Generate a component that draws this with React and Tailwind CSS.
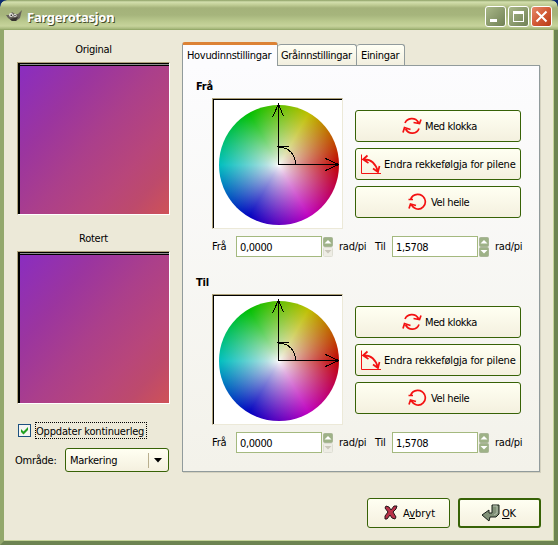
import React from "react";

const wheelBg =
  "bg-[radial-gradient(circle_closest-side,rgba(0,0,0,0)_0%,rgba(0,0,0,.056)_5%,rgba(0,0,0,.112)_20%,rgba(0,0,0,.158)_40%,rgba(0,0,0,.194)_60%,rgba(0,0,0,.224)_80%,rgba(0,0,0,.25)_100%),radial-gradient(circle_closest-side,rgba(255,255,255,1),rgba(255,255,255,0)),conic-gradient(from_90deg,#f00,#f0f,#00f,#0ff,#0f0,#ff0,#f00)]";

function Preview() {
  return (
    <div className="w-[153px] h-[153px] border border-t-[#aca078] border-l-[#aca078] border-b-white border-r-white">
      <div className="h-full w-full border-l-2 border-t border-black">
        <div className="h-full w-full border-t border-[#8f8f8f]">
          <div className="h-full w-full border-t border-black bg-[linear-gradient(130deg,#8a2dc0_0%,#9b359f_28%,#ab3f8b_50%,#b8467a_72%,#bd4a6c_85%,#cf5257_100%)]" />
        </div>
      </div>
    </div>
  );
}

function Wheel() {
  return (
    <div className="relative w-[131px] h-[131px] bg-white border border-t-[#aca078] border-l-[#aca078] border-b-[#ece9d8] border-r-[#ece9d8]">
      <div className="w-full h-full border-t border-l border-black pl-[5px] pt-[5px]">
        <div className={"w-[120px] h-[120px] rounded-full " + wheelBg} />
      </div>
      <svg className="absolute -left-px -top-px" width="131" height="131" fill="none" stroke="#000" shapeRendering="crispEdges">
        <path d="M66.5 5V66.5H127M66.5 6L60.5 19.500M66.5 6L71.500 18.500M126.500 66.5L113.500 60.500M126.500 66.5L113.500 72.500M65 48.500H77M67 49.500C77 49 83.500 57 83.500 66" />
      </svg>
    </div>
  );
}

function CycleIcon() {
  return (
    <svg width="20" height="18" viewBox="0 0 20 18" fill="none" stroke="#f31212" strokeWidth="1.700">
      <path d="M3 6C5 1 13 -.5 16.500 5.500M19 2.500L17.500 6.500L11.500 5.500M17 11.500C15 17 7 18 3.500 12M1 15.500L2.500 10.500L8.500 12.500" />
    </svg>
  );
}

function SwapIcon() {
  return (
    <svg width="20" height="21" viewBox="0 0 20 21" fill="none" stroke="#f31212">
      <path d="M.5 .5V19.500H20" />
      <path strokeWidth="1.700" d="M2 5.500C10 5 15 10 17 18M6.500 1.500L2 5.500L7.500 9M12 14.500L17 18L18.500 12" />
    </svg>
  );
}

function FullIcon() {
  return (
    <svg width="19" height="19" viewBox="0 0 19 19" fill="none" stroke="#f31212" strokeWidth="1.700">
      <path d="M.5 6.500H5M2.500 6.500C5 0 13.500 -.5 16.500 5.500C19.500 12 13 18 7.500 15.500C5 14.500 4 13 3 11.500M1 15.500L2.500 11L8 12.500" />
    </svg>
  );
}

function SideButton({ children, className = "" }) {
  return (
    <button className={"flex h-8 w-[166px] items-center rounded-[3px] border border-[#376206] bg-linear-to-b from-[#fffff2] to-[#f4f0df] whitespace-nowrap " + className}>
      {children}
    </button>
  );
}

function Spin({ value, off }) {
  return (
    <div className="flex items-center">
      <div className="h-[21px] w-[86px] border border-[#a4b97f] bg-white pl-[3px] leading-[21px] tracking-[-0.4px]">{value}</div>
      <svg className="ml-px" width="11" height="20">
        <rect x=".5" y=".5" width="9" height="9" rx="1" fill="#9eb287" stroke="#a9b697" />
        <path d="M1.500 6.500H8.500L5 3Z" fill="#fff" />
        <rect x=".5" y="10.500" width="9" height="9" rx="1" fill={off ? "#eeede5" : "#9eb287"} stroke={off ? "#deded4" : "#a9b697"} />
        <path d="M1.500 13H8.500L5 16.500Z" fill={off ? "#c9c7ba" : "#fff"} />
      </svg>
    </div>
  );
}

function Section({ title }) {
  return (
    <section className="h-[196px]">
      <h2 className="ml-[13px] h-[19px] font-bold leading-[16px]">{title}</h2>
      <div className="ml-[29px] flex h-[138px]">
        <Wheel />
        <div className="ml-3 mt-3 flex flex-col gap-1.5">
          <SideButton className="pl-[46px]">
            <CycleIcon />
            <span className="ml-[3px] pt-px tracking-[-0.4px]">Med klokka</span>
          </SideButton>
          <SideButton className="pl-[5px]">
            <SwapIcon />
            <span className="ml-[3px] pt-px tracking-[-0.18px]">Endra rekkefølgja for pilene</span>
          </SideButton>
          <SideButton className="pl-[52px]">
            <FullIcon />
            <span className="ml-[4px] pt-px tracking-[-0.4px]">Vel heile</span>
          </SideButton>
        </div>
      </div>
      <div className="ml-[29px] flex h-[21px] items-center">
        <span className="w-[24px] pt-px">Frå</span>
        <Spin value="0,0000" off />
        <span className="ml-[5px] w-[36px] pt-px">rad/pi</span>
        <span className="w-[17px] pt-px">Til</span>
        <Spin value="1,5708" />
        <span className="ml-[5px] pt-px">rad/pi</span>
      </div>
    </section>
  );
}

function TitleBar() {
  return (
    <header className="flex h-[30px] shrink-0 items-start rounded-t-[7px] border-b border-[#96aa6b] bg-[linear-gradient(#8c9f64_0px,#d3dfae_2px,#bfcc94_5px,#a4b27a_8px,#a6b57c_15px,#bccb90_22px,#c6d39b_26px,#98ac6e_30px)] pl-[6px] pr-[6px]">
      <svg className="mt-[9px]" width="17" height="14" viewBox="0 0 17 14">
        <path d="M0 6L4 6L6 3L9 5L12 5L16 1L14 9L10 12L6 12L2 9Z" fill="#67635b" />
        <path d="M4 10L12 8L10 12L6 12Z" fill="#35332f" />
        <circle cx="5" cy="6" r="2" fill="#e5e4de" />
        <circle cx="9" cy="6.500" r="1.700" fill="#d4d4ce" />
        <circle cx="5.300" cy="6.200" r=".8" fill="#111" />
        <circle cx="9" cy="6.600" r=".7" fill="#111" />
      </svg>
      <h1 className="ml-[4px] mt-[8px] text-[13px] font-bold leading-[18px] tracking-[-0.25px] text-white [text-shadow:1px_1px_0_#47502c] font-['Noto_Sans','Open_Sans',sans-serif]">Fargerotasjon</h1>
      <div className="ml-auto mt-[6px] flex gap-[2px]">
        <div className="h-[21px] w-[21px] rounded-[3px] border border-white bg-linear-to-br from-[#a9b889] to-[#718155] pl-[4px] pt-[12px]">
          <div className="h-[3px] w-[7px] bg-white" />
        </div>
        <div className="h-[21px] w-[21px] rounded-[3px] border border-white bg-linear-to-br from-[#a9b889] to-[#718155] pl-[4px] pt-[4px]">
          <div className="h-[11px] w-[11px] border border-t-[3px] border-white" />
        </div>
        <div className="flex h-[21px] w-[21px] items-center justify-center rounded-[3px] border border-white bg-linear-to-br from-[#e58a6b] via-[#d25a35] to-[#b93c14]">
          <svg width="13" height="13" stroke="#fff" strokeWidth="2"><path d="M1.500 1.500L11.500 11.500M11.500 1.500L1.500 11.500" /></svg>
        </div>
      </div>
    </header>
  );
}

export default function App() {
  return (
    <div className="h-[545px] w-[558px] overflow-hidden bg-[#0c2c70] text-[11px] leading-[14px] text-black font-['DejaVu_Sans_Condensed','DejaVu_Sans',sans-serif] tracking-[-0.25px]">
      <div className="flex h-full flex-col overflow-hidden rounded-t-[7px]">
        <TitleBar />
        <div className="flex flex-1 flex-col border-x-4 border-b-4 border-[#a4b878] border-r-[#6d8452] border-b-[#6d8452] bg-[#ece9d8] shadow-[inset_-1px_-1px_0_#c4d398] [border-left-color:#93a86c]">
          <div className="flex h-[442px]">
            <aside className="ml-[13px] w-[153px]">
              <div className="h-8 pt-[13px] text-center">Original</div>
              <Preview />
              <div className="h-9 pt-[17px] text-center">Rotert</div>
              <Preview />
              <div className="mt-[18px] flex h-[17px] items-center pl-px">
                <div className="flex h-[13px] w-[13px] items-center justify-center border border-[#1c5180] bg-[#f5f5f1]">
                  <svg width="9" height="9"><path d="M1 3L3.500 5.500L8 1V4L3.500 8.500L1 6Z" fill="#21a121" /></svg>
                </div>
                <div className="ml-1 h-[17px] w-[112px] whitespace-nowrap border border-dotted border-black leading-[17px] tracking-[-0.18px]">Oppdater kontinuerleg</div>
              </div>
              <div className="-ml-[2px] mt-[9px] flex h-6 items-center">
                <span className="w-[50px] whitespace-nowrap pt-[2px]">Område:</span>
                <div className="flex h-6 w-[104px] shrink-0 items-center rounded-[3px] border border-[#376206] bg-linear-to-b from-[#fffff2] to-[#f4f0df] pl-1">
                  <span className="pt-[2px]">Markering</span>
                  <div className="ml-auto flex h-[15px] w-[20px] items-center border-l border-[#b9af8e] pl-[5px]">
                    <svg width="8" height="5"><path d="M0 0H8L4 4.500Z" fill="#000" /></svg>
                  </div>
                </div>
              </div>
            </aside>
            <main className="ml-[12px] mt-[12px] flex h-[430px] w-[358px] flex-col">
              <nav className="flex h-[23px] items-end tracking-[-0.32px]">
                <div className="z-10 -mb-px h-[24px] w-[96px] whitespace-nowrap rounded-t-[3px] border-x border-t-[3px] border-x-[#919b9c] border-t-[#dc8235] bg-[#fcfcfe] pl-1 pt-[4px]">Hovudinnstillingar</div>
                <div className="h-[21px] w-[79px] whitespace-nowrap rounded-t-[3px] border border-b-0 border-l-0 border-[#919b9c] bg-linear-to-b from-[#fffff4] to-[#f2efdf] pl-[3px] pt-[4px]">Gråinnstillingar</div>
                <div className="h-[21px] w-[48px] whitespace-nowrap rounded-t-[3px] border border-b-0 border-l-0 border-[#919b9c] bg-linear-to-b from-[#fffff4] to-[#f2efdf] pl-[4px] pt-[4px]">Einingar</div>
              </nav>
              <div className="h-[407px] border border-[#919b9c] bg-linear-to-b from-[#fcfcfe] to-[#f3f2ea] pt-[13px] shadow-[1px_1px_0_#d4d1bf]">
                <Section title="Frå" />
                <Section title="Til" />
              </div>
            </main>
          </div>
          <footer className="mt-[26px] flex justify-end gap-2 pr-[13px]">
            <button className="flex h-[30px] w-[83px] items-center rounded-[3px] border border-[#376206] bg-linear-to-b from-[#fffff2] to-[#f4f0df] pl-[16px]">
              <svg width="14" height="16" viewBox="0 0 14 16"><path d="M2 1L5 2L7 5L10 1L13 1L12 4L9 7L12 12L11 14L8 13L6 10L3 14L1 14L1 11L4 7L1 3Z" fill="#b83249" stroke="#241518" /></svg>
              <span className="ml-[5px] pt-[2px] tracking-[0px]">A<u>v</u>bryt</span>
            </button>
            <button className="flex h-[30px] w-[83px] items-center rounded-[3px] border-2 border-[#376206] bg-linear-to-b from-[#fffff2] to-[#f4f0df] pl-[21px]">
              <svg width="19" height="19" viewBox="0 0 19 19"><path d="M11 1H18V10L15 13H9L8 17L1 11L8 6V9H11Z" fill="#819178" stroke="#18201a" /><path d="M12 2H16V9L13 11" fill="none" stroke="#b3bead" /></svg>
              <span className="ml-[2px] pt-[2px]"><u>O</u>K</span>
            </button>
          </footer>
        </div>
      </div>
    </div>
  );
}
